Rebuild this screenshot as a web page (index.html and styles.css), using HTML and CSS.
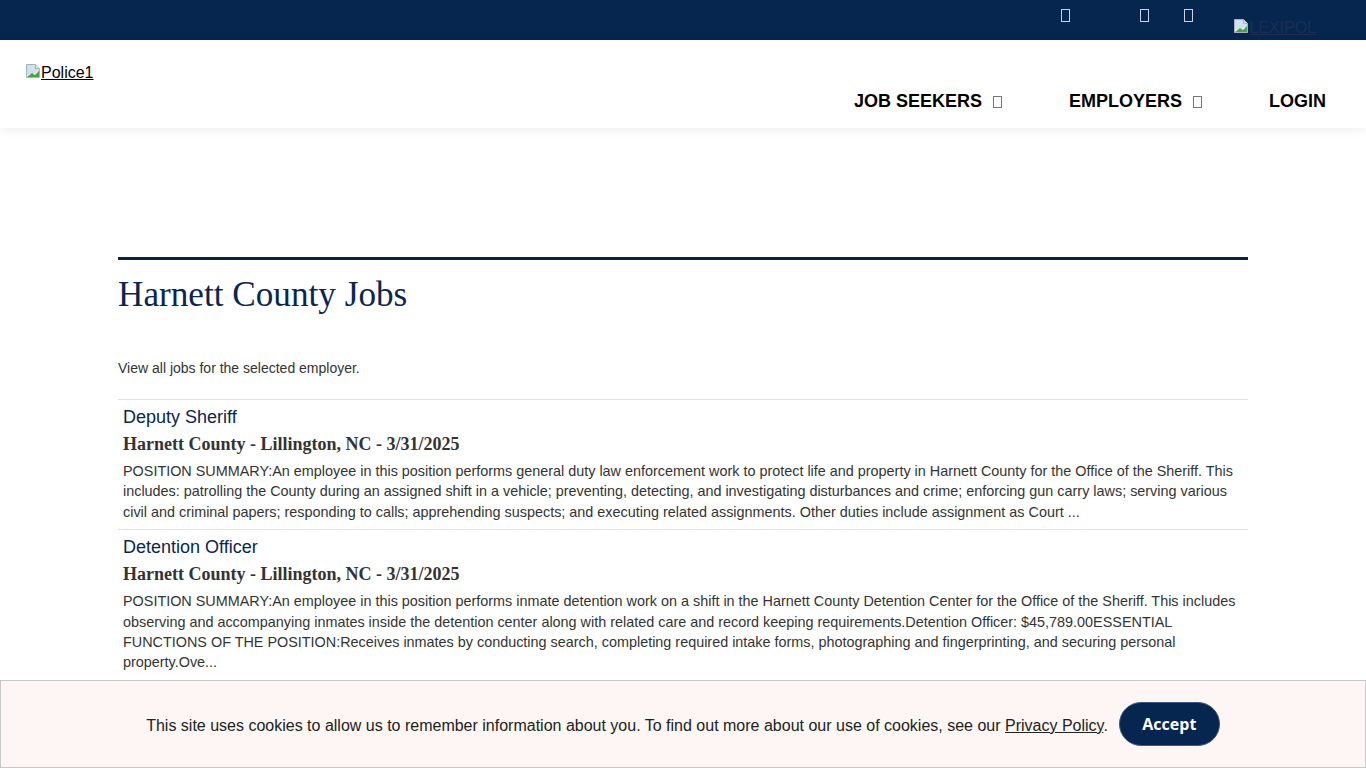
FILE: index.html
```html
<!DOCTYPE html>
<html lang="en">
<head>
  <meta charset="UTF-8">
  <meta name="viewport" content="width=device-width, initial-scale=1.0">
  <title>Harnett County Jobs | Police1</title>
  <link rel="stylesheet" href="styles.css">
</head>
<body>
  <div class="topbar">
    <a class="top-icon first" href="#"><span class="tofu"></span></a>
    <div class="social">
      <a class="top-icon" href="#"><span class="tofu"></span></a>
      <a class="top-icon" href="#"><span class="tofu"></span></a>
    </div>
    <a class="broken lexipol" href="#">
      <svg class="broken-icon" width="16" height="16" viewBox="0 0 16 16">
        <path d="M1.5 1.5h9l4 4v9h-13z" fill="#f3f5f7" stroke="#a8b0b8"/>
        <path d="M10.5 1.5v4h4" fill="#dde2e6" stroke="#a8b0b8"/>
        <path d="M2 2h8v4h4v3L2 12z" fill="#cfe0f0"/>
        <path d="M2 14l5-4 3 2 4-4v6z" fill="#4aa24a"/>
      </svg>LEXIPOL</a>
  </div>

  <header class="header">
    <a class="broken logo" href="#">
      <svg class="broken-icon" width="16" height="16" viewBox="0 0 16 16">
        <path d="M1.5 1.5h9l4 4v9h-13z" fill="#f3f5f7" stroke="#a8b0b8"/>
        <path d="M10.5 1.5v4h4" fill="#dde2e6" stroke="#a8b0b8"/>
        <path d="M2 2h8v4h4v3L2 12z" fill="#cfe0f0"/>
        <path d="M2 14l5-4 3 2 4-4v6z" fill="#4aa24a"/>
      </svg>Police1</a>
    <nav class="nav">
      <a href="#">JOB SEEKERS <span class="tofu dark"></span></a>
      <a href="#">EMPLOYERS <span class="tofu dark"></span></a>
      <a href="#">LOGIN</a>
    </nav>
  </header>

  <main class="container">
    <h1>Harnett County Jobs</h1>
    <p class="intro">View all jobs for the selected employer.</p>

    <div class="job-list">
      <div class="job">
        <a class="job-title" href="#">Deputy Sheriff</a>
        <h3 class="job-meta">Harnett County - Lillington, NC - 3/31/2025</h3>
        <p class="job-desc">POSITION SUMMARY:An employee in this position performs general duty law enforcement work to protect life and property in Harnett County for the Office of the Sheriff. This includes: patrolling the County during an assigned shift in a vehicle; preventing, detecting, and investigating disturbances and crime; enforcing gun carry laws; serving various civil and criminal papers; responding to calls; apprehending suspects; and executing related assignments. Other duties include assignment as Court ...</p>
      </div>
      <div class="job">
        <a class="job-title" href="#">Detention Officer</a>
        <h3 class="job-meta">Harnett County - Lillington, NC - 3/31/2025</h3>
        <p class="job-desc">POSITION SUMMARY:An employee in this position performs inmate detention work on a shift in the Harnett County Detention Center for the Office of the Sheriff. This includes observing and accompanying inmates inside the detention center along with related care and record keeping requirements.Detention Officer: $45,789.00ESSENTIAL FUNCTIONS OF THE POSITION:Receives inmates by conducting search, completing required intake forms, photographing and fingerprinting, and securing personal property.Ove...</p>
      </div>
    </div>
  </main>

  <div class="cookie-bar">
    <p>This site uses cookies to allow us to remember information about you. To find out more about our use of cookies, see our <a href="#">Privacy Policy</a>.</p>
    <button class="accept-btn">Accept</button>
  </div>
</body>
</html>
```

FILE: styles.css
```css
body {
  margin: 0;
  font-family: 'Liberation Sans', Arial, sans-serif;
  color: #333;
  background-color: #fff;
}
a {
  color: inherit;
}
.topbar {
  height: 40px;
  background-color: #06264f;
  display: flex;
  align-items: flex-start;
  justify-content: flex-end;
  padding-right: 50px;
  box-sizing: border-box;
}
.top-icon {
  display: block;
  padding-top: 9px;
  line-height: 0;
}
.top-icon.first {
  margin-right: 70px;
}
.social {
  display: flex;
  gap: 35px;
}
.tofu {
  display: inline-block;
  width: 7px;
  height: 11px;
  border: 1px solid #c9d3e3;
}
.tofu.dark {
  width: 7px;
  height: 10px;
  border-color: #777;
  margin-left: 6px;
  vertical-align: -1px;
}
.broken {
  display: inline-flex;
  align-items: flex-start;
  font-size: 16px;
  line-height: 19px;
}
.broken-icon {
  flex: none;
}
.lexipol {
  margin-left: 40px;
  margin-top: 18px;
  color: #1c2f52;
}
.logo {
  color: #000;
}
.header {
  height: 88px;
  padding: 23px 40px 0 25px;
  box-sizing: border-box;
  display: flex;
  justify-content: space-between;
  align-items: flex-start;
  background-color: #fff;
  box-shadow: 0 2px 10px rgba(0, 0, 0, 0.07);
  position: relative;
}
.nav {
  display: flex;
  gap: 67px;
  margin-top: 27px;
}
.nav a {
  color: #000;
  text-decoration: none;
  font-weight: bold;
  font-size: 18px;
  line-height: 22px;
}
.container {
  width: 1130px;
  margin: 129px auto 0;
  border-top: 3px solid #0b2240;
  padding-bottom: 120px;
}
h1 {
  font-family: 'Liberation Serif', 'Times New Roman', serif;
  font-weight: normal;
  font-size: 35.2px;
  line-height: 40px;
  color: #0a2650;
  margin: 15px 0 0;
}
.intro {
  font-size: 14px;
  line-height: 18px;
  margin: 44px 0 22px;
}
.job {
  border-top: 1px solid #e3e3e3;
  padding: 6px 5px 7px;
}
.job:last-child {
  border-bottom: 1px solid #e3e3e3;
}
.job-title {
  display: block;
  font-size: 18px;
  line-height: 22px;
  color: #0a2650;
  text-decoration: none;
}
.job-meta {
  font-family: 'Liberation Serif', 'Times New Roman', serif;
  font-size: 18px;
  line-height: 22px;
  margin: 5px 0 0;
  color: #333;
}
.job-desc {
  font-size: 14.4px;
  line-height: 20.4px;
  margin: 6px 0 0;
}
.cookie-bar {
  position: fixed;
  left: 0;
  right: 0;
  bottom: 0;
  height: 88px;
  box-sizing: border-box;
  border: 1px solid #c8c8c8;
  background-color: #fdf6f4;
  display: flex;
  align-items: center;
  justify-content: center;
  gap: 11px;
}
.cookie-bar p {
  margin: 0;
  padding-top: 3px;
  font-size: 16px;
  color: #222;
}
.accept-btn {
  width: 101px;
  height: 44px;
  border-radius: 22px;
  border: 1px solid #3d5a80;
  background-color: #06264f;
  color: #fff;
  font-family: 'Open Sans', sans-serif;
  font-weight: bold;
  font-size: 16px;
  cursor: pointer;
}
```
